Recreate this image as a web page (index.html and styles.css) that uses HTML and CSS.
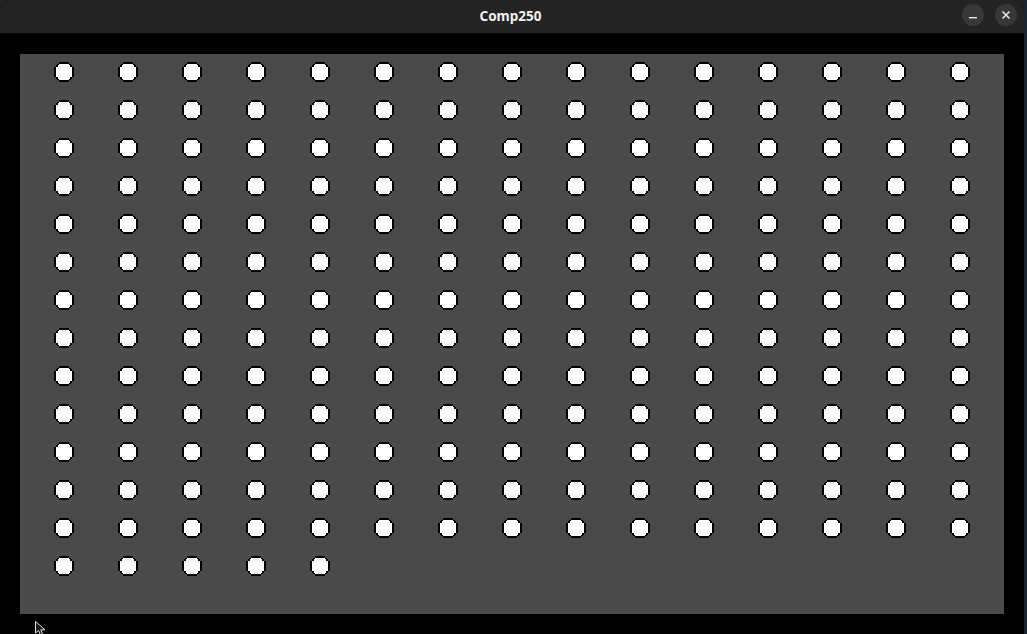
FILE: index.html
```html
<!DOCTYPE html>
<html>
<head>
<meta charset="utf-8">
<title>Comp250</title>
<link rel="stylesheet" href="styles.css">
</head>
<body>
<div class="window">
  <header class="titlebar">
    <div class="title">Comp250</div>
    <div class="controls">
      <button class="ctl" aria-label="Minimize">
        <svg width="10" height="10" viewBox="0 0 10 10"><rect x="1" y="7" width="8" height="1.4" fill="#e8e8e8"/></svg>
      </button>
      <button class="ctl" aria-label="Close">
        <svg width="10" height="10" viewBox="0 0 10 10"><path d="M1.5 1.5 L8.5 8.5 M8.5 1.5 L1.5 8.5" stroke="#e8e8e8" stroke-width="1.5"/></svg>
      </button>
    </div>
  </header>
  <main class="content">
    <div class="canvas">
      <div class="grid" id="grid"></div>
    </div>
  </main>
</div>
<svg class="cursor" width="14" height="16" viewBox="0 0 14 16"><path d="M0.5 0.5 L0.5 12 L3.5 9.5 L6 15 L8 14 L5.8 8.8 L10 8.8 Z" fill="#1a1a1a" stroke="#e0e0e0" stroke-width="1"/></svg>
<script src="script.js"></script>
</body>
</html>
```
FILE: styles.css
```css
html, body {
  margin: 0;
  padding: 0;
  background: #1b2430;
  width: 1027px;
  height: 634px;
  overflow: hidden;
}
.window {
  width: 1024px;
  height: 634px;
  background: #000;
  border-radius: 10px 10px 0 0;
  overflow: hidden;
  display: flex;
  flex-direction: column;
}
.titlebar {
  height: 33px;
  flex: none;
  background: #242424;
  position: relative;
  display: flex;
  align-items: center;
  justify-content: flex-end;
  padding-right: 7px;
}
.title {
  position: absolute;
  left: 0;
  right: 0;
  top: 0;
  bottom: 0;
  display: flex;
  align-items: center;
  justify-content: center;
  color: #f0f0f0;
  font-family: "Noto Sans", "DejaVu Sans", sans-serif;
  font-weight: bold;
  font-size: 13.5px;
  padding-bottom: 2px;
  padding-right: 3px;
}
.controls {
  display: flex;
  gap: 11px;
  position: relative;
  padding-bottom: 3px;
}
.ctl {
  width: 22px;
  height: 22px;
  border-radius: 50%;
  border: none;
  padding: 0;
  background: #383838;
  display: flex;
  align-items: center;
  justify-content: center;
}
.content {
  flex: 1;
  padding: 21px 0 0 20px;
}
.canvas {
  width: 984px;
  height: 560px;
  background: #4a4a4a;
  box-sizing: border-box;
  padding: 8px 0 0 34px;
}
.grid {
  display: grid;
  grid-template-columns: repeat(15, 20px);
  column-gap: 44px;
  row-gap: 18px;
}
.dot {
  width: 20px;
  height: 20px;
  display: block;
}
.cursor {
  position: absolute;
  left: 35px;
  top: 621px;
}
```
FILE: script.js
```js
var g = document.getElementById('grid');
var html = '';
var dot = '<svg class="dot" viewBox="0 0 20 20" shape-rendering="crispEdges">' +
  '<path fill="#000" d="M5 0h10v2h-10z M3 2h2v1h-2z M15 2h2v1h-2z M2 3h2v2h-2z M16 3h2v2h-2z M0 5h2v10h-2z M18 5h2v10h-2z M2 15h2v2h-2z M16 15h2v2h-2z M3 17h2v1h-2z M15 17h2v1h-2z M5 18h10v2h-10z"/>' +
  '<path fill="#fff" d="M5 2h10v1h1v2h2v10h-2v2h-1v1h-10v-1h-1v-2h-2v-10h2v-2h1z"/>' +
  '</svg>';
for (var i = 0; i < 200; i++) {
  html += dot;
}
g.innerHTML = html;
```
